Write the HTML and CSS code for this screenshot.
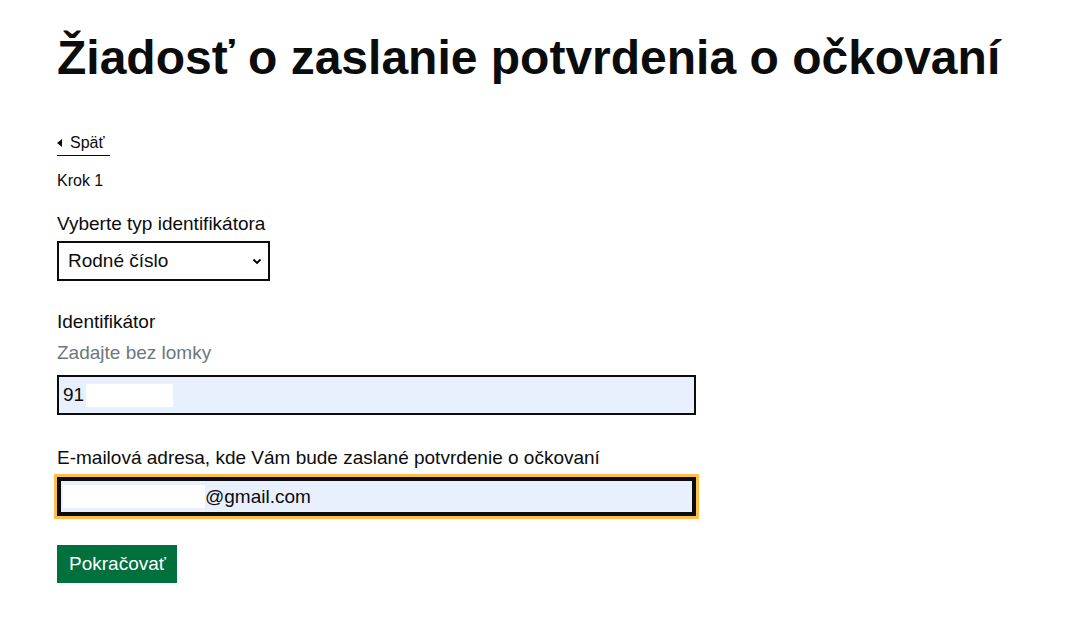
FILE: index.html
```html
<!DOCTYPE html>
<html lang="sk">
<head>
<meta charset="utf-8">
<title>Žiadosť o zaslanie potvrdenia o očkovaní</title>
<link rel="stylesheet" href="styles.css">
</head>
<body>
<main class="page">
  <h1 class="title">Žiadosť o zaslanie potvrdenia o očkovaní</h1>
  <a class="back" href="#"><span class="back-arrow"></span>Späť</a>
  <div class="step">Krok 1</div>
  <div class="group g1">
    <label class="label" for="typ">Vyberte typ identifikátora</label>
    <div class="select">
      <span>Rodné číslo</span>
      <svg class="chev" width="10" height="7" viewBox="0 0 10 7"><path d="M1.5 1.5 L5 5 L8.5 1.5" fill="none" stroke="#000" stroke-width="1.8"/></svg>
    </div>
  </div>
  <div class="group g2">
    <div class="label">Identifikátor</div>
    <div class="hint">Zadajte bez lomky</div>
    <div class="input"><span>91</span><span class="redact r1"></span></div>
  </div>
  <div class="group g3">
    <div class="label">E-mailová adresa, kde Vám bude zaslané potvrdenie o očkovaní</div>
    <div class="input focus"><span class="redact r2"></span><span>@gmail.com</span></div>
  </div>
  <button class="btn">Pokračovať</button>
</main>
</body>
</html>
```
FILE: styles.css
```css
html, body { margin: 0; padding: 0; background: #fff; }
body { font-family: "Liberation Sans", Arial, sans-serif; color: #0b0c0c; }
.page { padding: 32px 57px 0 57px; }
.title { font-size: 48px; font-weight: 700; margin: 0 0 48px 0; line-height: 1.1; color: #0b0c0c; }
.back { display: inline-flex; align-items: center; font-size: 16px; color: #0b0c0c; text-decoration: none; border-bottom: 1px solid #0b0c0c; padding: 0 6px 3px 0; line-height: 19px; }
.back-arrow { width: 0; height: 0; border-top: 4px solid transparent; border-bottom: 4px solid transparent; border-right: 5px solid #0b0c0c; margin-right: 8px; }
.step { font-size: 16px; margin-top: 15px; line-height: 19px; }
.label { display: block; font-size: 19px; line-height: 22px; }
.g1 { margin-top: 23px; }
.g2 { margin-top: 30px; }
.g3 { margin-top: 32px; }
.hint { font-size: 19px; line-height: 22px; color: #6f777b; margin-top: 9px; }
.select { margin-top: 6px; width: 213px; height: 40px; box-sizing: border-box; border: 2px solid #0b0c0c; display: flex; align-items: center; justify-content: space-between; padding: 0 6px 0 9px; font-size: 19px; }
.input { margin-top: 11px; width: 639px; height: 40px; box-sizing: border-box; border: 2px solid #0b0c0c; background: #e8f0fe; display: flex; align-items: center; padding: 0 4px; font-size: 19px; }
.redact { display: inline-block; background: #fff; height: 23px; }
.r1 { width: 87px; margin-left: 2px; }
.r2 { width: 142px; }
.focus { margin-top: 8px; border: 4px solid #0b0c0c; outline: 3px solid #ffbf47; height: 39px; padding: 0 2px; }
.btn { display: block; margin-top: 29px; background: #00703c; color: #fff; border: 0; box-shadow: 0 2px 0 #002d18; font-family: "Liberation Sans", Arial, sans-serif; font-size: 19px; padding: 0 11px 0 12px; height: 38px; line-height: 38px; cursor: pointer; }
```
